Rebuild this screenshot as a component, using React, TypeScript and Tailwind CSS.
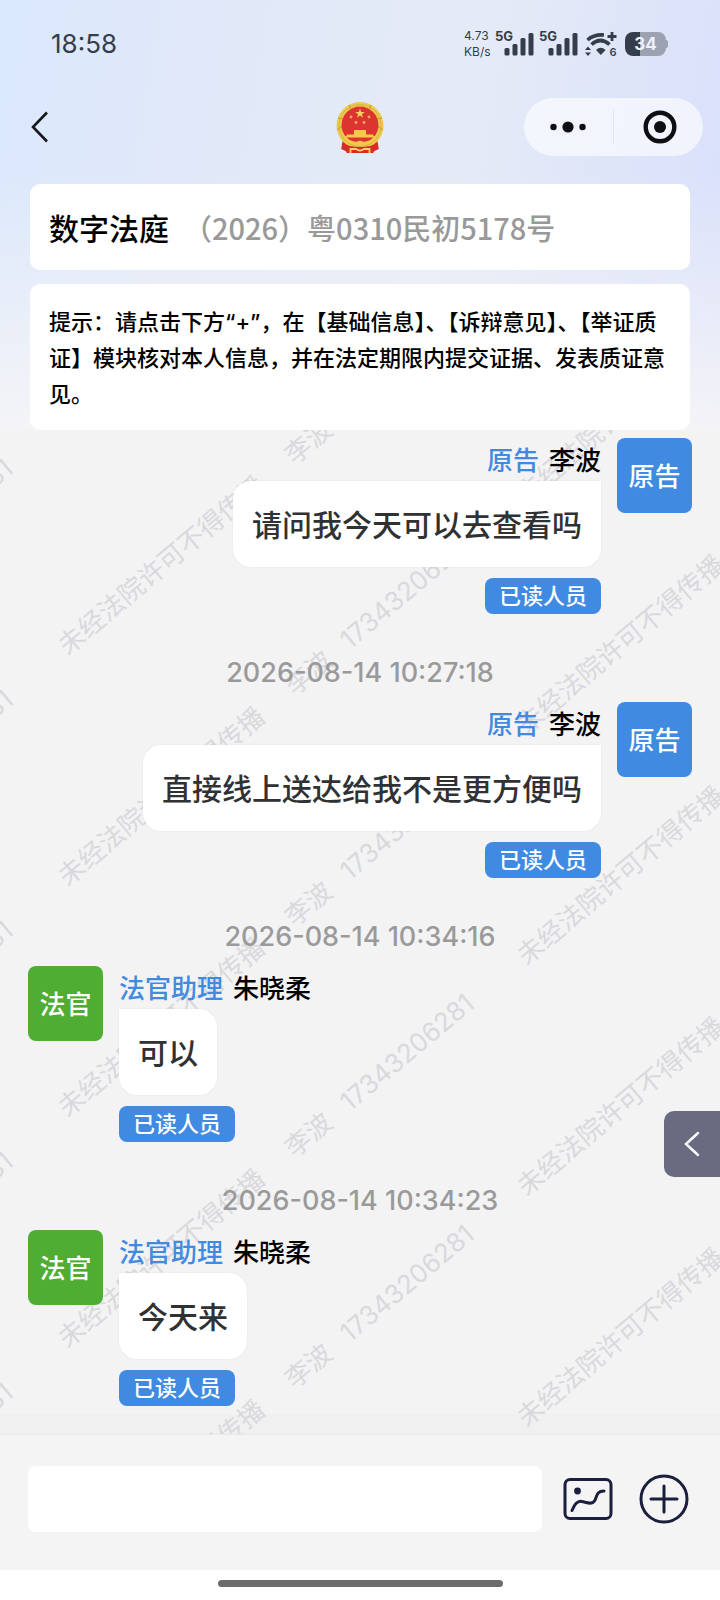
import React, { useState } from 'react';

interface Message {
  id: number;
  side: 'left' | 'right';
  avatar: string;
  role: string;
  name: string;
  text: string;
  nextTime?: string;
}

const messages: Message[] = [
  { id: 1, side: 'right', avatar: '原告', role: '原告', name: '李波', text: '请问我今天可以去查看吗', nextTime: '2026-08-14 10:27:18' },
  { id: 2, side: 'right', avatar: '原告', role: '原告', name: '李波', text: '直接线上送达给我不是更方便吗', nextTime: '2026-08-14 10:34:16' },
  { id: 3, side: 'left', avatar: '法官', role: '法官助理', name: '朱晓柔', text: '可以', nextTime: '2026-08-14 10:34:23' },
  { id: 4, side: 'left', avatar: '法官', role: '法官助理', name: '朱晓柔', text: '今天来' },
];

const watermarkColumns = [
  { left: -399, top: 361, rows: 5 },
  { left: 62, top: 203, rows: 5 },
  { left: 521, top: 51, rows: 5 },
];
const WATERMARK_STEP = 231;

const Signal = () => (
  <div className="relative w-[39px] h-6">
    <span className="absolute left-0 -top-1 text-[13px] leading-4 font-bold">5G</span>
    <svg className="w-full h-full" viewBox="0 0 39 24" fill="currentColor" aria-hidden="true">
      <rect x="9.5" y="16" width="5" height="7.5" rx="1.5" />
      <rect x="17.5" y="12" width="5" height="11.5" rx="1.5" />
      <rect x="25.5" y="6" width="5" height="17.5" rx="1.5" />
      <rect x="33.5" y="1" width="5" height="22.5" rx="1.5" />
    </svg>
  </div>
);

const Wifi = () => (
  <svg className="w-8 h-[26px]" viewBox="0 0 32 26" fill="none" aria-hidden="true">
    <path d="M2.5 9 Q9 3.2 19 4" stroke="currentColor" strokeWidth="3.6" />
    <path d="M6.5 13.5 Q15.5 5.5 24.5 13.5" stroke="currentColor" strokeWidth="3.6" />
    <path d="M11 19 Q15.8 14.6 20.6 19 L15.8 24 Z" fill="currentColor" />
    <path d="M22.5 5.5 H31.5 M27 1 V10" stroke="currentColor" strokeWidth="2.8" />
    <path d="M0 19 L3 15.5 L6 19 Z M0 21.5 L3 25 L6 21.5 Z" fill="currentColor" />
    <text x="24.5" y="25" fontSize="11" fontWeight="600" fill="currentColor">6</text>
  </svg>
);

const Emblem = () => (
  <svg className="w-12 h-[52px]" viewBox="0 0 48 52" role="img" aria-label="国徽">
    <path d="M7 38 L5.5 48 L10 50 L11 52 H37 L38 50 L42.5 48 L41 38 Z" fill="#d62d28" />
    <circle cx="24" cy="24.5" r="23.5" fill="#ecc94f" />
    <circle cx="24" cy="24.5" r="21" fill="none" stroke="#d9b53c" strokeWidth="1" />
    <path d="M1 29 L6.5 25 M47 29 L41.5 25 M2 17 L7 18 M46 17 L41 18 M13 4 L15 8 M35 4 L33 8" stroke="#c99a2c" strokeWidth="1" />
    <circle cx="24" cy="24" r="18.5" fill="#dc3430" />
    <path d="M24 7.5 L25.2 11 H28.8 L25.9 13.2 L27 16.7 L24 14.6 L21 16.7 L22.1 13.2 L19.2 11 H22.8 Z" fill="#f7d25c" />
    <g fill="#f2a963">
      <circle cx="15" cy="16" r="1.4" />
      <circle cx="33" cy="16" r="1.4" />
      <circle cx="20" cy="21.5" r="1.4" />
      <circle cx="28" cy="21.5" r="1.4" />
    </g>
    <path d="M18 29 H30 V33.5 H37 L38.5 36.5 H9.5 L11 33.5 H18 Z" fill="#f6c94d" />
    <path d="M6 42 Q13 46 24 46 Q35 46 42 42 L42.5 48 L38 50 L37 52 H11 L10 50 L5.5 48 Z" fill="#d62d28" />
    <path d="M8.5 36 Q13 42.5 24 42.5 Q35 42.5 39.5 36" fill="none" stroke="#f6c94d" strokeWidth="2.5" />
    <path d="M18.5 43 Q24 36 29.5 43 Z" fill="#f6c94d" />
    <path d="M14.5 52 V48 H20 Q24 51 28 48 H33.5 V52" fill="none" stroke="#f6d36a" strokeWidth="1.8" />
  </svg>
);

const StatusBar = () => (
  <div className="h-[86px] pt-[2px] pl-[51px] pr-[52px] flex items-center justify-between text-[#343d49]">
    <span className="text-[26px] leading-8">18:58</span>
    <div className="flex items-center">
      <div className="w-[31px] text-[12px] leading-4">
        <div>4.73</div>
        <div>KB/s</div>
      </div>
      <Signal />
      <div className="w-[5px]"></div>
      <Signal />
      <div className="w-[7px]"></div>
      <Wifi />
      <div className="ml-2 flex items-center">
        <div className="w-[41px] h-6 rounded-lg bg-[linear-gradient(to_right,#343d49_37%,#9ca2b2_37%)] flex items-center justify-center text-[17px] leading-6 font-bold text-[#eef1f8]">34</div>
        <div className="w-[2px] h-2 rounded-r bg-[#9ca2b2]"></div>
      </div>
    </div>
  </div>
);

const NavBar = () => (
  <div className="mt-3 h-[58px] px-[17px] grid grid-cols-[1fr_auto_1fr] items-center">
    <button type="button" aria-label="返回" className="w-8 h-8 ml-[14px]">
      <svg className="w-[18px] h-8" viewBox="0 0 18 32" fill="none" stroke="#16181c" strokeWidth="2.6" aria-hidden="true">
        <path d="M16 1.5 L2 16 L16 30.5" />
      </svg>
    </button>
    <Emblem />
    <div className="justify-self-end w-[179px] h-[58px] rounded-full bg-white/60 grid grid-cols-2 divide-x divide-[#dfe5f0]">
      <button type="button" aria-label="更多" className="my-3 flex items-center justify-center">
        <svg className="w-9 h-3" viewBox="0 0 36 12" fill="#0d0f12" aria-hidden="true">
          <circle cx="3.5" cy="6" r="3.2" />
          <circle cx="18" cy="6" r="5.6" />
          <circle cx="32.5" cy="6" r="3.2" />
        </svg>
      </button>
      <button type="button" aria-label="关闭" className="my-3 pl-1 flex items-center justify-center">
        <svg className="w-[34px] h-[34px]" viewBox="0 0 34 34" aria-hidden="true">
          <circle cx="17" cy="17" r="14.3" fill="none" stroke="#0d0f12" strokeWidth="4.4" />
          <circle cx="17" cy="17" r="6" fill="#0d0f12" />
        </svg>
      </button>
    </div>
  </div>
);

const Watermark = () => (
  <div className="absolute inset-0 overflow-hidden pointer-events-none select-none" aria-hidden="true">
    {watermarkColumns.map((col) =>
      Array.from({ length: col.rows }, (_, row) => (
        <div
          key={`${col.left}-${row}`}
          className="absolute flex origin-left -rotate-40 whitespace-nowrap text-[26px] leading-8 text-[#d9d9dd]"
          style={{ left: col.left, top: col.top + row * WATERMARK_STEP }}
        >
          <span>未经法院许可不得传播</span>
          <span className="ml-9 mr-5">李波</span>
          <span>17343206281</span>
        </div>
      ))
    )}
  </div>
);

const MessageItem = ({ message }: { message: Message }) => {
  const isRight = message.side === 'right';

  return (
    <>
      <div className={`flex items-start gap-4 ${isRight ? 'flex-row-reverse' : ''}`}>
        <div
          className={`w-[75px] h-[75px] pt-[2px] shrink-0 rounded-lg flex items-center justify-center text-[26px] leading-8 font-medium text-white
            ${isRight ? 'bg-[#408ae2]' : 'bg-[#50ad34]'}`}
        >
          {message.avatar}
        </div>
        <div className={`flex flex-col ${isRight ? 'items-end' : 'items-start'}`}>
          <div className="h-[43px] pt-[2px] flex items-center gap-[10px] text-[26px] leading-8 font-medium">
            <span className="text-[#408ae2]">{message.role}</span>
            <span className="text-black">{message.name}</span>
          </div>
          <p
            className={`h-[86px] px-[19px] pt-[2px] flex items-center bg-white text-[30px] leading-10 font-medium text-[#303133] shadow-[0_0_2px_rgba(0,0,0,0.08)]
              ${isRight ? 'rounded-[18px] rounded-tr-none' : 'rounded-[18px] rounded-tl-none'}`}
          >
            {message.text}
          </p>
          <button
            type="button"
            className="mt-[11px] h-9 px-[14px] rounded-lg bg-[#408ae2] text-[22px] leading-8 font-medium text-white"
          >
            已读人员
          </button>
        </div>
      </div>
      {message.nextTime && (
        <p className="h-[88px] pt-[30px] flex items-center justify-center text-[27px] leading-8 font-medium text-[#9a9a9b]">
          {message.nextTime}
        </p>
      )}
    </>
  );
};

const App: React.FC = () => {
  const [draft, setDraft] = useState('');

  return (
    <div lang="zh-CN" className="min-h-screen flex flex-col bg-white font-['Inter','Noto_Sans_CJK_SC',sans-serif]">
      {/* Header */}
      <header className="bg-[linear-gradient(to_bottom,transparent_40%,#f4f4f7),linear-gradient(100deg,#dae8fc,#e0e8f9_25%,#e5ebf6_60%,#d8dffb)]">
        <StatusBar />
        <NavBar />
        <div className="pt-7 px-[30px] flex flex-col gap-[14px]">
          <div className="h-[86px] px-[19px] rounded-[10px] bg-white flex items-center gap-[14px] leading-10 font-medium font-['Noto_Sans_CJK_SC',sans-serif]">
            <h1 className="text-[30px] text-black">数字法庭</h1>
            <span className="text-[29px] text-[#999]">（2026）粤0310民初5178号</span>
          </div>
          <p className="px-[19px] pt-5 pb-[18px] rounded-[10px] bg-white text-[22px] leading-9 font-medium text-black">
            提示：请点击下方“+”，在【基础信息】、【诉辩意见】、【举证质
            <wbr />
            证】模块核对本人信息，并在法定期限内提交证据、发表质证意见。
          </p>
        </div>
      </header>

      {/* Chat */}
      <main className="relative flex-1 bg-[linear-gradient(to_top,#f0f0f1_20px,#f3f3f4_20px)]">
        <Watermark />
        <div className="relative px-7 pt-2 pb-7">
          {messages.map((message) => (
            <MessageItem key={message.id} message={message} />
          ))}
        </div>
        <button
          type="button"
          aria-label="展开"
          className="absolute right-0 top-[681px] w-14 h-[66px] rounded-l-[10px] bg-[#696c80] flex items-center justify-center"
        >
          <svg className="w-4 h-[26px]" viewBox="0 0 16 26" fill="none" stroke="#fff" strokeWidth="2.4" strokeLinecap="round" aria-hidden="true">
            <path d="M14 2 L2 13 L14 24" />
          </svg>
        </button>
      </main>

      {/* Input bar */}
      <footer>
        <div className="h-[136px] pt-[31px] pl-7 pr-[31px] flex items-start bg-[#f4f4f5] border-t border-[#e9e9ea]">
          <input
            type="text"
            aria-label="消息"
            value={draft}
            onChange={(e) => setDraft(e.target.value)}
            className="flex-1 min-w-0 h-[66px] px-5 rounded-lg bg-white text-[26px] outline-none"
          />
          <div className="h-[66px] ml-[21px] flex items-center gap-[26px]">
            <button type="button" aria-label="图片">
              <svg className="w-[50px] h-[50px]" viewBox="0 0 50 50" fill="none" stroke="#1b1e3c" strokeWidth="3" strokeLinecap="round" aria-hidden="true">
                <rect x="2" y="5.5" width="46" height="39" rx="5" />
                <circle cx="14.5" cy="17" r="3.4" fill="#1b1e3c" stroke="none" />
                <path d="M9 36.5 C12 29 15 26.5 19 27.5 C24 28.5 29 31 31.5 27 C34 23 33 17 41 17" />
              </svg>
            </button>
            <button type="button" aria-label="添加">
              <svg className="w-[50px] h-[50px]" viewBox="0 0 50 50" fill="none" stroke="#1b1e3c" strokeWidth="3" strokeLinecap="round" aria-hidden="true">
                <circle cx="25" cy="25" r="23" />
                <path d="M25 12 V38 M12 25 H38" />
              </svg>
            </button>
          </div>
        </div>
        <div className="h-[30px] pb-1 flex items-center justify-center bg-white">
          <div className="w-[285px] h-[7px] rounded-full bg-[#6b6c6b]"></div>
        </div>
      </footer>
    </div>
  );
};

export default App;
